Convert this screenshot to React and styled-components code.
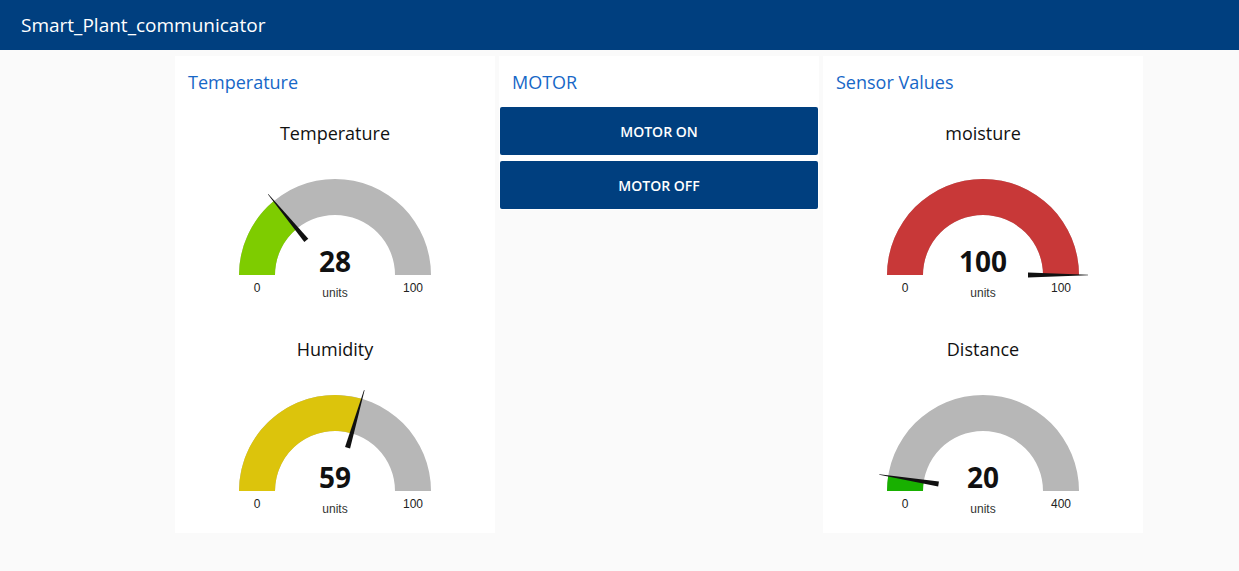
import React from "react";
import styled, { createGlobalStyle } from "styled-components";

const GlobalStyle = createGlobalStyle`
  html, body { margin: 0; padding: 0; }
  body {
    background: #fafafa;
    font-family: "Open Sans", "Noto Sans", sans-serif;
  }
`;

const Header = styled.header`
  height: 50px;
  background: #003f7f;
  color: #fff;
  display: flex;
  align-items: center;
  padding-left: 21px;
  font-size: 19px;
  box-sizing: border-box;
`;

const Main = styled.main`
  display: flex;
  align-items: flex-start;
  gap: 4px;
  padding: 6px 0 0 175px;
`;

const Card = styled.section`
  width: 320px;
  background: #fff;
  display: flex;
  flex-direction: column;
  gap: 6px;
  padding-bottom: ${(p) => p.$padBottom || 0}px;
`;

const CardTitle = styled.h2`
  margin: 0 0 -6px 0;
  height: 51px;
  display: flex;
  align-items: center;
  padding-left: 13px;
  font-size: 18px;
  font-weight: 500;
  color: #1767c7;
`;

const Button = styled.button`
  margin: 0 1px;
  height: 48px;
  border: none;
  border-radius: 2px;
  background: #003f7f;
  color: #fff;
  font-family: "Open Sans", "Noto Sans", sans-serif;
  font-size: 14px;
  font-weight: 600;
  cursor: pointer;
`;

const GaugeWrap = styled.div`
  height: 210px;
  display: flex;
  flex-direction: column;
  align-items: center;
`;

const GaugeTitle = styled.div`
  padding-top: 14px;
  line-height: 24px;
  font-size: 18px;
  font-weight: 500;
  color: #111;
`;

const GaugeSvg = styled.svg`
  display: block;
`;

const CX = 160;
const CY = 130;
const R = 96;
const r = 60;

function pt(rad, t) {
  return [CX - rad * Math.cos(t), CY - rad * Math.sin(t)];
}

function arcPath(f) {
  const t = Math.PI * f;
  const [ox, oy] = pt(R, t);
  const [ix, iy] = pt(r, t);
  return `M ${CX - R} ${CY} A ${R} ${R} 0 0 1 ${ox} ${oy} L ${ix} ${iy} A ${r} ${r} 0 0 0 ${CX - r} ${CY} Z`;
}

function needlePath(f) {
  const t = Math.PI * f;
  const ux = -Math.cos(t);
  const uy = -Math.sin(t);
  const px = -uy;
  const py = ux;
  const b = 45;
  const e = 105;
  const bw = 2.6;
  const ew = 0.3;
  const p1 = [CX + ux * b + px * bw, CY + uy * b + py * bw];
  const p2 = [CX + ux * e + px * ew, CY + uy * e + py * ew];
  const p3 = [CX + ux * e - px * ew, CY + uy * e - py * ew];
  const p4 = [CX + ux * b - px * bw, CY + uy * b - py * bw];
  return `M ${p1.join(" ")} L ${p2.join(" ")} L ${p3.join(" ")} L ${p4.join(" ")} Z`;
}

function Gauge({ title, value, min, max, color }) {
  const f = Math.max(0, Math.min(1, (value - min) / (max - min)));
  return (
    <GaugeWrap>
      <GaugeTitle>{title}</GaugeTitle>
      <GaugeSvg width="320" height="172" viewBox="0 0 320 172">
        <path d={arcPath(1)} fill="#b7b7b7" />
        {f > 0 && <path d={arcPath(f)} fill={color} />}
        <path d={needlePath(f)} fill="#111" />
        <text
          x={CX}
          y={CY - 3}
          textAnchor="middle"
          fontFamily="'Open Sans', 'Noto Sans', sans-serif"
          fontWeight="700"
          fontSize="28"
          fill="#111"
        >
          {value}
        </text>
        <text
          x={CX}
          y={CY + 22}
          textAnchor="middle"
          fontFamily="'Liberation Sans', Arial, sans-serif"
          fontSize="12"
          fill="#333"
        >
          units
        </text>
        <text
          x={CX - 78}
          y={CY + 17}
          textAnchor="middle"
          fontFamily="'Liberation Sans', Arial, sans-serif"
          fontSize="12"
          fill="#222"
        >
          {min}
        </text>
        <text
          x={CX + 78}
          y={CY + 17}
          textAnchor="middle"
          fontFamily="'Liberation Sans', Arial, sans-serif"
          fontSize="12"
          fill="#222"
        >
          {max}
        </text>
      </GaugeSvg>
    </GaugeWrap>
  );
}

export default function App() {
  return (
    <>
      <GlobalStyle />
      <Header>Smart_Plant_communicator</Header>
      <Main>
        <Card>
          <CardTitle>Temperature</CardTitle>
          <Gauge title="Temperature" value={28} min={0} max={100} color="#7ecc00" />
          <Gauge title="Humidity" value={59} min={0} max={100} color="#dcc40c" />
        </Card>
        <Card $padBottom={1}>
          <CardTitle>MOTOR</CardTitle>
          <Button>MOTOR ON</Button>
          <Button>MOTOR OFF</Button>
        </Card>
        <Card>
          <CardTitle>Sensor Values</CardTitle>
          <Gauge title="moisture" value={100} min={0} max={100} color="#c83838" />
          <Gauge title="Distance" value={20} min={0} max={400} color="#18b000" />
        </Card>
      </Main>
    </>
  );
}
